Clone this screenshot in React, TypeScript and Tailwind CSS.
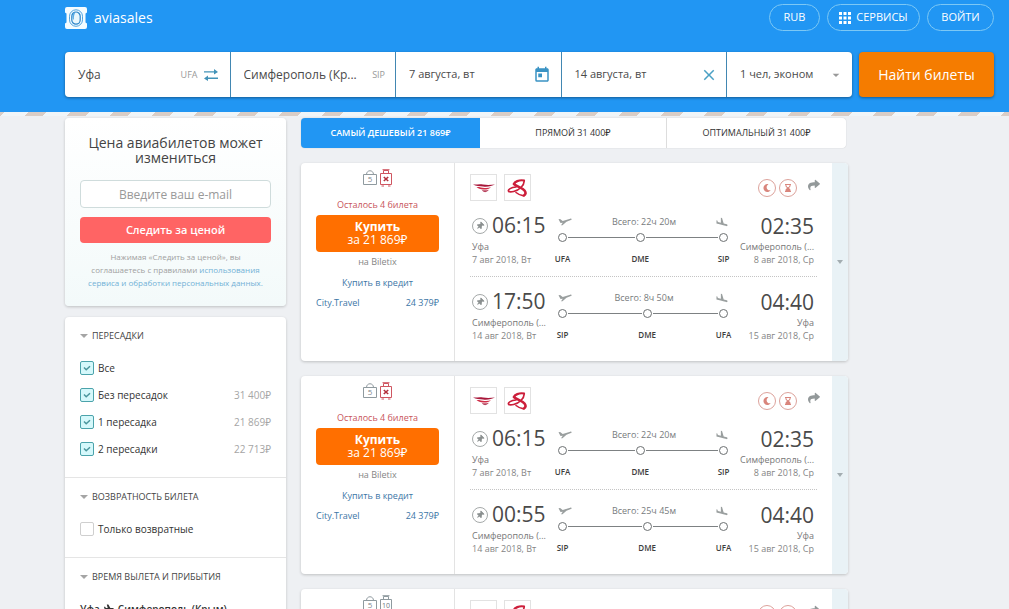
import { FaHourglassEnd, FaMoon, FaPlane, FaShare, FaThumbtack } from "react-icons/fa";
import { MdArrowDropDown, MdClose, MdToday } from "react-icons/md";

type Leg = {
  time: string;
  city: string;
  date: string;
  toTime: string;
  toCity: string;
  toDate: string;
  total: string;
  stops: [string, string, string];
  // share of the line before the middle stop, in percent
  split: number;
};

type Ticket = {
  bag: string;
  noBag: boolean;
  legs: Leg[];
};

const outbound: Leg = {
  time: "06:15",
  city: "Уфа",
  date: "7 авг 2018, Вт",
  toTime: "02:35",
  toCity: "Симферополь (...",
  toDate: "8 авг 2018, Ср",
  total: "Всего: 22ч 20м",
  stops: ["UFA", "DME", "SIP"],
  split: 48,
};

const inbound: Leg = {
  time: "17:50",
  city: "Симферополь (...",
  date: "14 авг 2018, Вт",
  toTime: "04:40",
  toCity: "Уфа",
  toDate: "15 авг 2018, Ср",
  total: "Всего: 8ч 50м",
  stops: ["SIP", "DME", "UFA"],
  split: 53,
};

const tickets: Ticket[] = [
  { bag: "×", noBag: true, legs: [outbound, inbound] },
  { bag: "×", noBag: true, legs: [outbound, { ...inbound, time: "00:55", total: "Всего: 25ч 45м" }] },
  { bag: "10", noBag: false, legs: [outbound, inbound] },
];

const transfers = [
  { id: "all", label: "Все", price: "" },
  { id: "direct", label: "Без пересадок", price: "31 400₽" },
  { id: "one", label: "1 пересадка", price: "21 869₽" },
  { id: "two", label: "2 пересадки", price: "22 713₽" },
];

const Logo = () => (
  <svg viewBox="0 0 22 22" className="h-[22px] w-[22px]">
    <path
      d="M2 0h18a2 2 0 0 1 2 2v3.500l-1.500 1v9l1.500 1V20a2 2 0 0 1-2 2H2a2 2 0 0 1-2-2v-3.500l1.500-1v-9l-1.500-1V2a2 2 0 0 1 2-2z"
      fill="#f4fcff"
    />
    <rect x="4.500" y="2.800" width="13" height="16.500" rx="6.500" fill="none" stroke="#3c98db" strokeWidth=".9" />
    <rect x="6.800" y="5" width="8.400" height="12.200" rx="4.200" fill="#e9f7fd" stroke="#2a84c8" strokeWidth="1.200" />
    <path d="M7.500 9.500c0-2.500 1.500-4 3-4-1.200 1.500-1.800 4-1.600 7.500-1-.8-1.400-2-1.400-3.500z" fill="#58ace6" />
  </svg>
);

const Swap = () => (
  <svg viewBox="0 0 14 14" className="h-3.5 w-3.5" fill="#4393b8">
    <path d="M0 3.200h10V1L14 3.900 10 6.500V4.600H0z" />
    <path d="M14 9.600H4V7.500L0 10.400l4 2.600v-2H14z" />
  </svg>
);

const Bags = ({ bag, noBag }: { bag: string; noBag: boolean }) => (
  <svg viewBox="0 0 30 18" className="h-[18px] w-[30px]" fill="none">
    <path d="M.5 5.500h13v10H.5zM3.500 5.500c0-5 7-5 7 0" stroke="#8f9a9f" strokeWidth="1" />
    <text x="7" y="13" fontSize="8" textAnchor="middle" fill="#7d878c">
      5
    </text>
    <g stroke={noBag ? "#cf5661" : "#8f9a9f"}>
      <path d="M17.500 4.500h11v11h-11zM20.500 4.500v-3h5v3M19.500 .7h7M18.500 17h2.500M25 17h2.500" />
    </g>
    {noBag ? (
      <path d="M20.800 8l4.400 4M25.200 8l-4.400 4" stroke="#b3303c" strokeWidth="1.600" />
    ) : (
      <text x="23" y="12.500" fontSize="7" textAnchor="middle" fill="#6d767b">
        {bag}
      </text>
    )}
  </svg>
);

const WingLogo = () => (
  <svg viewBox="0 0 22 12" className="h-3 w-[22px]">
    <path d="M0 2.500c3 .3 6-.6 10 0 4 .7 8 .4 12 0-3 1.600-8 2.600-12 1.900C6.500 3.800 3 4.500 0 2.500z" fill="#a8173a" />
    <path d="M3.500 5c3-.2 5 .7 8 .9 2.500.2 4.500-.1 6.500-.7-2 1.900-5 2.700-8 2.300C7.500 7.200 5 6.700 3.500 5z" fill="#d02d47" />
    <path d="M9 8c2 .5 4 .5 7-.2-1.500 1.700-3 2.500-4.500 2.300C10 9.800 9.500 9 9 8z" fill="#b9445f" />
  </svg>
);

const SwirlLogo = () => (
  <svg viewBox="0 0 22 18" className="h-[18px] w-[22px]" fill="none" stroke="#cc1f3b" strokeLinecap="round">
    <path d="M17 1.500C12 .5 7.500 3 7 5" strokeWidth="2.200" />
    <path d="M7 5c2.500 2.500 8 3.500 10.500 6.500 1.800 2.300 1 4-.5 5" strokeWidth="2.600" />
    <path d="M17 16.500c-3 .5-5.500-1-8-3" strokeWidth="1.600" />
    <path d="M9 8C4 8.500.8 10.500 1.500 12c1 2 8.500.5 12.500-3.500C16.500 6 17.500 4 17 1.500" strokeWidth="1.700" />
  </svg>
);

const Takeoff = () => (
  <svg viewBox="0 0 14 8" className="h-2 w-3.5" fill="#9a9f9f">
    <path d="M.5 1.200l1.600-.2 2.600 2 7.500-2.300c1.500-.4 2 .7.700 1.200L8.500 3.700 4.500 7.200H3l1.800-2.500-2.300.2z" />
  </svg>
);

const Landing = () => (
  <svg viewBox="2 1.500 20 15" className="h-2.5 w-3" fill="#9a9f9f">
    <path d="M9.680 13.270l4.350 1.160 5.310 1.420c.8.210 1.620-.26 1.840-1.060.21-.8-.26-1.620-1.060-1.840l-5.310-1.420-2.760-9.020L10.120 2v8.280L5.150 8.950l-.93-2.320-1.450-.39v5.170l1.600.43 5.310 1.430z" />
  </svg>
);

const CheckBox = ({ id, checked }: { id: string; checked?: boolean }) => (
  <span className="grid h-[14px] w-[14px]">
    <input
      id={id}
      type="checkbox"
      defaultChecked={checked}
      className="peer col-start-1 row-start-1 h-[14px] w-[14px] appearance-none rounded-xs border border-[#cfcfcf] bg-white checked:border-[#4ba3ab] checked:bg-[#d5f8fb]"
    />
    <svg
      viewBox="0 0 14 14"
      className="pointer-events-none invisible col-start-1 row-start-1 h-[14px] w-[14px] peer-checked:visible"
      fill="none"
      stroke="#4a959c"
      strokeWidth="1.500"
    >
      <path d="M4 6.500l2.200 2.200L10 5.200" />
    </svg>
  </span>
);

const Dot = () => <span className="h-[9px] w-[9px] shrink-0 rounded-full border border-[#6c7072] bg-white" />;

const StopLabel = ({ children }: { children: string }) => (
  <span className="flex w-[9px] shrink-0 justify-center whitespace-nowrap">{children}</span>
);

const LegRow = ({ leg }: { leg: Leg }) => {
  const before = { flexGrow: leg.split };
  const after = { flexGrow: 100 - leg.split };
  return (
    <div className="flex h-[60px]">
      <div className="w-[82px] shrink-0 pl-0.5 whitespace-nowrap">
        <div className="flex h-7 items-center gap-1">
          <button
            aria-label="Закрепить рейс"
            className="flex h-4 w-4 items-center justify-center rounded-full border border-[#a5a9a9] text-[#8b9090]"
          >
            <FaThumbtack className="h-2 w-2 rotate-45" />
          </button>
          <span className="text-[21px] text-[#4a4a4a]">{leg.time}</span>
        </div>
        <p className="text-[9px] leading-[13px] font-medium text-[#777]">{leg.city}</p>
        <p className="text-[9px] leading-[13px] text-[#858585]">{leg.date}</p>
      </div>
      <div className="flex-1 pr-[9px] pl-1.5">
        <div className="flex h-[19px] items-center justify-between text-[9px] text-[#777b7d]">
          <Takeoff />
          <span>{leg.total}</span>
          <Landing />
        </div>
        <div className="mt-0.5 flex items-center">
          <Dot />
          <span className="mx-px h-px bg-[#7d8183]" style={before} />
          <Dot />
          <span className="mx-px h-px bg-[#7d8183]" style={after} />
          <Dot />
        </div>
        <div className="mt-2.5 flex text-[8px] leading-[13px] font-semibold text-[#3d3d3d]">
          <StopLabel>{leg.stops[0]}</StopLabel>
          <span className="mx-px" style={before} />
          <StopLabel>{leg.stops[1]}</StopLabel>
          <span className="mx-px" style={after} />
          <StopLabel>{leg.stops[2]}</StopLabel>
        </div>
      </div>
      <div className="w-20 shrink-0 pr-[3px] text-right whitespace-nowrap">
        <p className="text-[21px] leading-7 text-[#4a4a4a]">{leg.toTime}</p>
        <p className="text-[9px] leading-[13px] font-medium text-[#777]">{leg.toCity}</p>
        <p className="text-[9px] leading-[13px] text-[#858585]">{leg.toDate}</p>
      </div>
    </div>
  );
};

const TicketCard = ({ ticket }: { ticket: Ticket }) => (
  <article className="flex h-[198px] overflow-hidden rounded-sm bg-white shadow-[0_1px_3px_rgba(0,0,0,0.2)]">
    <div className="flex w-[154px] shrink-0 flex-col items-center border-r border-[#e3e3e3] px-[15px] pt-1.5 text-[9px]">
      <Bags bag={ticket.bag} noBag={ticket.noBag} />
      <p className="mt-[11px] leading-[14px] text-[#c8555c]">Осталось 4 билета</p>
      <button className="mt-[3px] flex h-[37px] w-full flex-col items-center rounded-sm bg-[#ff6f00] pt-[5px] text-xs leading-[13px] text-white">
        <span className="font-bold">Купить</span>
        <span>за 21 869₽</span>
      </button>
      <p className="mt-[3px] leading-[13px] text-[#858585]">на Biletix</p>
      <a href="#" className="mt-2 leading-[13px] text-[#3c76a6]">
        Купить в кредит
      </a>
      <a href="#" className="mt-[7px] flex w-full justify-between leading-[13px] text-[#3c76a6]">
        <span>City.Travel</span>
        <span>24 379₽</span>
      </a>
    </div>
    <div className="flex-1 pt-[11px] pr-[15px] pl-[15px]">
      <div className="flex items-start justify-between">
        <div className="flex gap-[7px]">
          <span className="flex h-[27px] w-[27px] items-center justify-center border border-[#e2e2e2]">
            <WingLogo />
          </span>
          <span className="flex h-[27px] w-[27px] items-center justify-center border border-[#e2e2e2]">
            <SwirlLogo />
          </span>
        </div>
        <div className="-mr-[3px] flex gap-[3px] pt-[5px] text-[#d9857c]">
          <span className="flex h-[18px] w-[18px] items-center justify-center rounded-full border border-[#dca29b]">
            <FaMoon className="h-2 w-2" />
          </span>
          <span className="flex h-[18px] w-[18px] items-center justify-center rounded-full border border-[#dca29b]">
            <FaHourglassEnd className="h-2 w-2" />
          </span>
          <button aria-label="Поделиться" className="ml-2 h-3 w-3 text-[#93999a]">
            <FaShare className="h-3 w-3" />
          </button>
        </div>
      </div>
      <div className="mt-[11px]">
        <LegRow leg={ticket.legs[0]} />
      </div>
      <div className="mt-1 border-t border-dotted border-[#c4c4c4] pt-[11px]">
        <LegRow leg={ticket.legs[1]} />
      </div>
    </div>
    <button
      aria-label="Подробнее"
      className="flex w-4 shrink-0 items-center justify-center bg-[#e9f2f6] text-[#a3adb1]"
    >
      <svg viewBox="0 0 6 4" className="h-1 w-1.5" fill="currentColor">
        <path d="M0 0h6L3 4z" />
      </svg>
    </button>
  </article>
);

const FilterTitle = ({ children }: { children: string }) => (
  <h3>
    <button className="flex items-center gap-1 text-[9px] leading-[13px] font-medium text-[#444]">
      <svg viewBox="0 0 8 4" className="h-1 w-2" fill="#a5a5a5">
        <path d="M0 0h8L4 4z" />
      </svg>
      {children}
    </button>
  </h3>
);

const Header = () => (
  <header className="bg-[#2196f3] pt-1 pr-[15px] pb-[15px] pl-[65px] text-white">
    <div className="flex h-[27px] items-center justify-between">
      <a href="#" className="flex items-center gap-[7px] text-sm">
        <Logo />
        aviasales
      </a>
      <nav className="flex gap-[7px] text-[11px] font-medium">
        <button className="h-[27px] w-[51px] rounded-full border border-[#7cc8f5]">RUB</button>
        <button className="flex h-[27px] w-[93px] items-center justify-center gap-[5px] rounded-full border border-[#7cc8f5]">
          <svg viewBox="0 0 12 12" className="h-3 w-3" fill="#fff">
            <path d="M0 0h3v3H0zM4.500 0h3v3h-3zM9 0h3v3H9zM0 4.500h3v3H0zM4.500 4.500h3v3h-3zM9 4.500h3v3H9zM0 9h3v3H0zM4.500 9h3v3h-3zM9 9h3v3H9z" />
          </svg>
          СЕРВИСЫ
        </button>
        <button className="h-[27px] w-[67px] rounded-full border border-[#7cc8f5]">ВОЙТИ</button>
      </nav>
    </div>
    <form className="mt-[21px] flex gap-[7px]" onSubmit={(e) => e.preventDefault()}>
      <div className="grid h-[45px] flex-1 grid-cols-[repeat(4,minmax(0,1fr))_125px] gap-px overflow-hidden rounded-sm bg-[#4287b2] text-[11px] text-[#4a4a4a] shadow-[0_1px_3px_rgba(0,0,0,0.4)]">
        <label className="flex items-center bg-white pr-3 pl-[13px]">
          <input aria-label="Откуда" defaultValue="Уфа" className="w-0 flex-1 text-xs outline-none" />
          <span className="mr-1.5 text-[9px] text-[#999]">UFA</span>
          <Swap />
        </label>
        <label className="flex items-center bg-white pr-2.5 pl-[13px]">
          <input aria-label="Куда" defaultValue="Симферополь (Кр..." className="w-0 flex-1 text-xs outline-none" />
          <span className="text-[9px] text-[#999]">SIP</span>
        </label>
        <label className="flex items-center bg-white pr-2.5 pl-[13px]">
          <input aria-label="Туда" defaultValue="7 августа, вт" className="w-0 flex-1 outline-none" />
          <MdToday className="h-[18px] w-[18px] text-[#3a93c4]" />
        </label>
        <label className="flex items-center bg-white pr-2 pl-[13px]">
          <input aria-label="Обратно" defaultValue="14 августа, вт" className="w-0 flex-1 outline-none" />
          <MdClose className="h-[18px] w-[18px] text-[#4aa0c4]" />
        </label>
        <button type="button" className="flex items-center justify-between bg-white pr-2 pl-[13px]">
          1 чел, эконом
          <MdArrowDropDown className="h-4 w-4 text-[#999]" />
        </button>
      </div>
      <button className="h-[45px] w-[135px] rounded-sm bg-[#f57c00] text-sm font-medium shadow-[0_1px_3px_rgba(0,0,0,0.4)]">
        Найти билеты
      </button>
    </form>
  </header>
);

const Sidebar = () => (
  <aside className="w-[221px] shrink-0">
    <form
      className="rounded-sm bg-linear-to-b from-white to-[#f3fafa] px-[15px] pt-[17px] pb-[17px] text-center shadow-[0_1px_3px_rgba(0,0,0,0.2)]"
      onSubmit={(e) => e.preventDefault()}
    >
      <h2 className="text-sm leading-[15px] text-[#444]">Цена авиабилетов может измениться</h2>
      <input
        type="email"
        aria-label="E-mail"
        placeholder="Введите ваш e-mail"
        className="mt-[15px] h-7 w-full rounded-sm border border-[#cfdcdc] bg-white text-center text-xs outline-none placeholder:text-[#999]"
      />
      <button className="mt-[9px] h-[26px] w-full rounded-sm bg-[#ff6464] text-[11px] font-semibold text-white">
        Следить за ценой
      </button>
      <p className="mt-[7px] text-[8px] leading-[13px] text-[#a0a0a0]">
        Нажимая «Следить за ценой», вы
        <br />
        соглашаетесь с правилами{" "}
        <a href="#" className="text-[#72b1d6]">
          использования
          <br />
          сервиса и обработки персональных данных.
        </a>
      </p>
    </form>

    <div className="mt-[11px] divide-y divide-[#e5e5e5] rounded-sm bg-white shadow-[0_1px_3px_rgba(0,0,0,0.2)]">
      <section className="px-[15px] pt-3 pb-[21px]">
        <FilterTitle>ПЕРЕСАДКИ</FilterTitle>
        <ul className="mt-[19px] space-y-[13px] text-[10px] leading-[14px] text-[#333]">
          {transfers.map((t) => (
            <li key={t.id} className="flex items-center gap-1">
              <CheckBox id={t.id} checked />
              <label htmlFor={t.id} className="flex-1">
                {t.label}
              </label>
              <span className="text-[#a5a5a5]">{t.price}</span>
            </li>
          ))}
        </ul>
      </section>
      <section className="px-[15px] pt-3 pb-[21px]">
        <FilterTitle>ВОЗВРАТНОСТЬ БИЛЕТА</FilterTitle>
        <div className="mt-[19px] flex items-center gap-1 text-[10px] leading-[14px] text-[#333]">
          <CheckBox id="refund" />
          <label htmlFor="refund">Только возвратные</label>
        </div>
      </section>
      <section className="px-[15px] pt-3 pb-5">
        <FilterTitle>ВРЕМЯ ВЫЛЕТА И ПРИБЫТИЯ</FilterTitle>
        <p className="mt-[19px] flex items-center gap-1 text-[10px] leading-[14px] font-semibold text-[#333]">
          Уфа <FaPlane className="h-2.5 w-2.5" /> Симферополь (Крым)
        </p>
      </section>
    </div>
  </aside>
);

const App = () => {
  return (
    <div className="min-h-screen bg-[#eef0f3] font-['Open_Sans','Noto_Sans',sans-serif]">
      <Header />
      <div className="h-1 bg-[repeating-linear-gradient(135deg,#d9cdc6_0px,#d9cdc6_3px,#f0f5f8_3px,#f0f5f8_20px,#d9cdc6_20px,#d9cdc6_30px)]" />
      <main className="flex gap-[15px] pt-0.5 pr-[15px] pb-6 pl-[65px]">
        <Sidebar />
        <div className="max-w-[547px] flex-1">
          <div className="mr-0.5 grid h-[30px] grid-cols-[179fr_186fr_180fr] overflow-hidden rounded-sm text-[9px] font-medium text-[#333] shadow-[0_0_1px_rgba(0,0,0,0.3)]">
            <button className="bg-[#2196f3] font-semibold text-white">САМЫЙ ДЕШЕВЫЙ 21 869₽</button>
            <button className="bg-white">ПРЯМОЙ 31 400₽</button>
            <button className="border-l border-[#ddd] bg-white">ОПТИМАЛЬНЫЙ 31 400₽</button>
          </div>
          <div className="mt-[15px] space-y-[15px]">
            {tickets.map((ticket, i) => (
              <TicketCard key={i} ticket={ticket} />
            ))}
          </div>
        </div>
      </main>
    </div>
  );
};

export default App;
